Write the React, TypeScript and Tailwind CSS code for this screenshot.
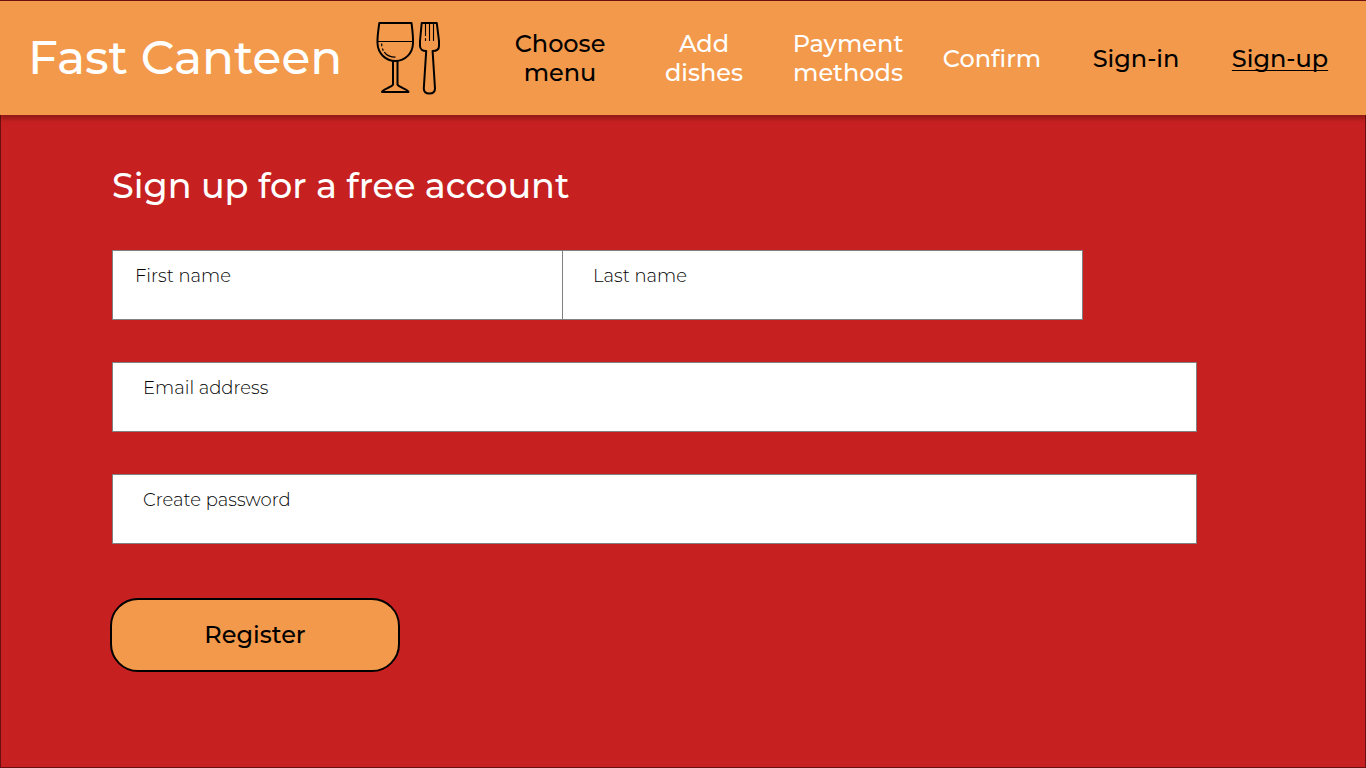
const navItems = [
  { label: "Choose menu", tone: "text-black" },
  { label: "Add dishes", tone: "text-white" },
  { label: "Payment methods", tone: "text-white" },
  { label: "Confirm", tone: "text-white" },
  { label: "Sign-in", tone: "text-black" },
  { label: "Sign-up", tone: "text-black underline decoration-1 underline-offset-3 [text-decoration-skip-ink:none]" },
];

function CutleryIcon() {
  return (
    <svg
      className="h-[74px] w-[66px] shrink-0"
      viewBox="0 0 66 74"
      fill="none"
      stroke="#000"
      strokeWidth="2"
      strokeLinejoin="round"
      aria-hidden="true"
    >
      <path d="M4.3 2H36.5C37.3 8.500 38.300 15 38 22.200C37.600 32.500 30.200 39.900 20.500 39.900S2.900 32.500 2.500 22.200C2.200 15 3.500 8.500 4.300 2Z" />
      <path d="M3 20.500H38" strokeWidth="1.100" />
      <path d="M6.700 22.500V25.200M7.400 27.500L8.300 29.800M9.300 31.200C11.600 34.400 15 36.200 20.500 36.200" strokeWidth="1.200" />
      <path d="M18 40V63.500C16.500 66.500 7 68.500 7 71H33.500C33.500 68.500 24 66.500 22.500 63.500V40" />
      <path d="M46.700 2H61.800L64 20V25C64 28 61.500 30 57.600 30L60 67.500C60 71 57.800 72.500 54.400 72.500S48.800 71 48.800 67.500L51.200 30C47.500 30 45 28 45 25V20Z" />
      <path d="M50.500 3V15M50.500 17.200V20M54.500 3V20M58.500 3V20" strokeWidth="1.100" />
    </svg>
  );
}

type FieldProps = {
  label: string;
  name: string;
  type?: string;
  autoComplete: string;
  className?: string;
};

function Field({ label, name, type = "text", autoComplete, className = "px-[30px]" }: FieldProps) {
  return (
    <div className={`flex h-[70px] min-w-0 flex-col border border-[#808080] bg-white pt-3 ${className}`}>
      <label htmlFor={name} className="text-[18px] leading-[26px] font-light text-black">
        {label}
      </label>
      <input
        id={name}
        name={name}
        type={type}
        autoComplete={autoComplete}
        className="h-6 w-full bg-transparent text-[18px] text-[#333] outline-none"
      />
    </div>
  );
}

export default function App() {
  return (
    <div className="flex min-h-screen flex-col bg-[#c62120] font-['Montserrat','Inter',sans-serif]">
      <header className="relative flex min-h-[115px] items-center border-t border-[#6b1010] bg-[#f3994b] pr-[14px] shadow-[0_4px_4px_rgba(0,0,0,0.25)]">
        <div className="flex w-[488px] shrink-0 items-center pl-[28px]">
          <div className="w-[347px] text-[47px] leading-[58px] font-medium whitespace-nowrap text-white">
            Fast Canteen
          </div>
          <CutleryIcon />
        </div>
        <nav className="grid flex-1 grid-cols-6 items-center text-center text-[24px] leading-[29px] font-medium">
          {navItems.map((item) => (
            <a key={item.label} href="#" className={`px-4 ${item.tone}`}>
              {item.label}
            </a>
          ))}
        </nav>
      </header>

      <main className="flex-1 border-x border-b border-[#6b1010] pt-12 pr-[168px] pb-20 pl-[111px]">
        <h1 className="text-[35px] leading-[46px] font-medium text-white">Sign up for a free account</h1>
        <form className="mt-[41px] flex flex-col gap-[42px]" onSubmit={(e) => e.preventDefault()}>
          <div className="mr-[114px] grid grid-cols-[450fr_521fr]">
            <Field label="First name" name="first-name" autoComplete="given-name" className="border-r-0 px-[22px]" />
            <Field label="Last name" name="last-name" autoComplete="family-name" />
          </div>
          <Field label="Email address" name="email" type="email" autoComplete="email" />
          <Field label="Create password" name="password" type="password" autoComplete="new-password" />
          <button
            type="submit"
            className="mt-3 -ml-[2px] h-[74px] w-[290px] rounded-[28px] border-2 border-black bg-[#f3994b] pb-[2px] text-[24px] leading-[29px] font-medium text-black"
          >
            Register
          </button>
        </form>
      </main>
    </div>
  );
}
